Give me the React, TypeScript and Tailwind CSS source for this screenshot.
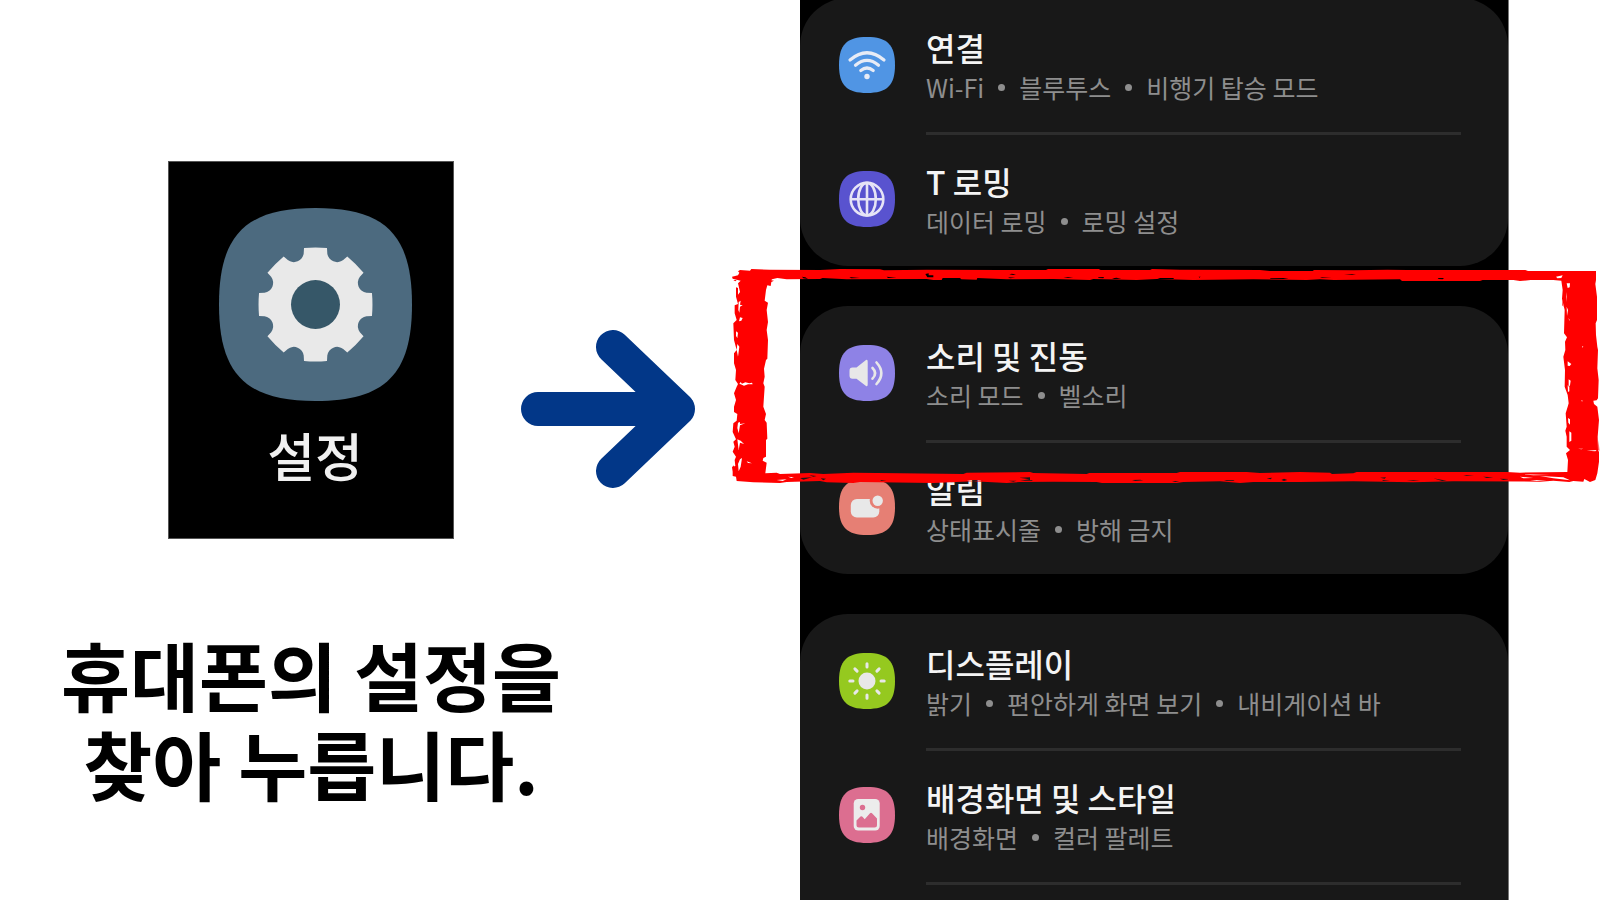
import type { ReactNode } from "react";

const SQUIRCLE = "M28 0C48.200 0 56 7.800 56 28S48.200 56 28 56 0 48.200 0 28 7.800 0 28 0Z";

type Setting = {
  title: string;
  details: string[];
  tile: string;
  glyph: ReactNode;
};

const wifi = (
  <g fill="none" stroke="#e8ecf6" strokeWidth="3.2" strokeLinecap="round">
    <path d="M11 23Q28 8.500 45 23" />
    <path d="M16.500 28.200Q28 18.500 39.500 28.200" />
    <path d="M21.800 33.500Q28 28.500 34.200 33.500" />
    <circle cx="28" cy="39.500" r="2.700" fill="#e8ecf6" stroke="none" />
  </g>
);

const globe = (
  <g fill="none" stroke="#e6e4f6" strokeWidth="2.600">
    <circle cx="28" cy="28.200" r="16.300" />
    <ellipse cx="28" cy="28.200" rx="8.800" ry="16.300" />
    <path d="M28 12V44.500M11.700 28.200H44.300" />
  </g>
);

const speaker = (
  <g fill="#e8e8e8">
    <path d="M13.500 22.500H17.500L27 15Q28.700 14 28.700 16.500V39.500Q28.700 42 27 41L17.500 33.700H13.500Q10.500 33.700 10.500 30.500V25.700Q10.500 22.500 13.500 22.500Z" />
    <g fill="none" stroke="#e8e8e8" strokeWidth="2.600" strokeLinecap="round">
      <path d="M33.500 23Q38.800 28.200 33.500 33.700" />
      <path d="M37.500 17.500Q47.200 28.200 37.500 39" />
    </g>
  </g>
);

const notice = (
  <g>
    <rect x="11.800" y="20" width="28.500" height="18.500" rx="6" fill="#e8e8e8" />
    <circle cx="38.700" cy="21.700" r="8" fill="#e67f74" />
    <circle cx="38.700" cy="21.700" r="5.200" fill="#e8e8e8" />
  </g>
);

const sun = (
  <g fill="#e8e8e8" stroke="#e8e8e8">
    <circle cx="28" cy="28" r="8.500" stroke="none" />
    <path
      strokeWidth="3"
      strokeLinecap="round"
      d="M28 10.800V14M28 42V45.200M10.800 28H14M42 28H45.200M15.900 15.900L18.100 18.100M37.900 37.900L40.100 40.100M40.100 15.900L37.900 18.100M18.100 37.900L15.900 40.100"
    />
  </g>
);

const picture = (
  <g>
    <rect x="14.700" y="12" width="26" height="31.500" rx="4.500" fill="#ececec" />
    <circle cx="23.500" cy="20.500" r="2.700" fill="#dc6e90" />
    <path
      d="M17.500 33.500L21.500 29.500Q22.500 28.800 23.500 29.800L25.700 32.200L31 26.300Q32 25.300 33 26.300L38 31.500V38Q38 40.500 35.500 40.500H20Q17.500 40.500 17.500 38Z"
      fill="#dc6e90"
    />
  </g>
);

const groups: Setting[][] = [
  [
    { title: "연결", details: ["Wi-Fi", "블루투스", "비행기 탑승 모드"], tile: "#5095e4", glyph: wifi },
    { title: "T 로밍", details: ["데이터 로밍", "로밍 설정"], tile: "#5953cf", glyph: globe },
  ],
  [
    { title: "소리 및 진동", details: ["소리 모드", "벨소리"], tile: "#8e82e6", glyph: speaker },
    { title: "알림", details: ["상태표시줄", "방해 금지"], tile: "#e67f74", glyph: notice },
  ],
  [
    { title: "디스플레이", details: ["밝기", "편안하게 화면 보기", "내비게이션 바"], tile: "#95c91f", glyph: sun },
    { title: "배경화면 및 스타일", details: ["배경화면", "컬러 팔레트"], tile: "#dc6e90", glyph: picture },
  ],
];

function Divider() {
  return <hr className="-mb-[3px] ml-[126px] mr-[47px] h-[3px] border-0 bg-[#2d2d2d]" />;
}

function SettingRow({ title, details, tile, glyph }: Setting) {
  return (
    <button type="button" className="flex h-[134px] w-full items-center gap-[31px] pl-[39px] text-left">
      <svg viewBox="0 0 56 56" className="size-14 shrink-0" aria-hidden="true">
        <path d={SQUIRCLE} fill={tile} />
        {glyph}
      </svg>
      <span className="flex flex-col whitespace-nowrap">
        <span className="text-[32px] leading-[44px] font-medium text-[#f4f4f4]">{title}</span>
        <span className="flex text-[25px] leading-9 text-[#8e8e8e]">
          {details.map((detail, i) => (
            <span key={detail} className="flex items-center">
              {i > 0 && <span className="mx-3.5 size-[7px] rounded-full bg-[#8e8e8e]" />}
              {detail}
            </span>
          ))}
        </span>
      </span>
    </button>
  );
}

/* Brush-stroke rectangle; the even-odd sub-paths leave the dry-brush flecks open. */
function BrushFrame() {
  return (
    <svg
      viewBox="36 24 2604 648"
      preserveAspectRatio="none"
      className="pointer-events-none absolute -top-[38px] -left-[68px] z-10 h-[216px] w-[calc(100%+160px)]"
      aria-hidden="true"
    >
      <g fill="#ff0000">
        <path
          fillRule="evenodd"
          d="M60 30L90 32 94 27 150 29 300 30 360 27 480 28 492 31 620 29 840 30 978 30 984 27 1136 27 1142 30 1290 30 1296 27 1380 29 1620 30 1650 33 1778 33 1782 30 1900 31 2002 29 2060 30 2416 30 2424 33 2628 33 2628 60 2626 72 2631 110 2631 180 2627 190 2628 225 2632 260 2634 270 2632 325 2636 360 2634 415 2630 421 2620 422 2622 432 2632 440 2637 480 2633 530 2634 570 2637 576 2637 605 2632 640 2626 660 2610 666 2593 657 2590 665 2560 663 2548 666 2500 662 2460 665 2200 664 2080 667 1900 664 1740 666 1600 666 1560 669 1500 664 1390 666 1370 669 1146 669 1130 666 1000 665 900 666 860 669 760 664 640 669 420 666 400 669 320 667 300 663 200 666 180 669 100 667 50 663 48 650 38 648 38 620 46 618 44 600 48 590 38 575 44 560 40 545 48 538 38 516 40 490 50 482 52 462 42 456 42 440 48 420 42 400 50 380 54 372 46 360 48 330 42 310 42 280 50 270 42 240 40 190 50 180 44 160 44 136 54 132 48 110 48 82 54 84 54 104 60 96 54 70 62 62 38 56 36 50 54 46 58 38 54 34Z
          M156 58L172 54 200 58 300 57 308 54 380 58 620 57 640 60 665 60 668 54 720 54 724 58 770 59 772 54 860 58 1000 57 1110 60 1120 57 1250 60 1310 57 1420 60 1600 58 1760 60 1800 58 1842 60 2040 58 2046 63 2280 63 2288 60 2380 60 2400 63 2432 60 2500 60 2524 62 2528 90 2526 116 2534 150 2532 220 2541 232 2535 245 2536 270 2530 290 2535 330 2534 380 2543 405 2546 430 2543 440 2537 460 2540 500 2536 512 2540 530 2540 560 2550 570 2538 580 2544 600 2542 636 2400 638 2360 636 1910 636 1900 640 1836 642 1830 638 1740 636 1620 639 1580 636 1380 636 1370 639 1108 639 1100 642 940 639 930 636 740 638 730 642 540 640 400 638 310 642 270 639 180 642 170 638 136 640 140 608 128 602 130 594 138 590 138 540 142 536 140 488 134 480 138 462 130 440 134 380 130 370 134 350 132 326 138 300 142 296 144 240 140 210 144 186 140 150 144 128 134 122 138 90 142 76 152 78 154 66 162 62 154 61Z
          M58 372L62 366 66 371 76 367 88 370 96 368 98 373 84 373 72 377 62 373Z
          M56 126L62 122 60 134 68 136 60 140 58 158 55 150Z M60 172L68 174 64 182 57 184Z M48 214L54 218 52 234 48 228Z M52 252L58 260 54 290 50 270Z
          M54 488L60 486 60 492 76 490 60 496 56 520 52 504Z M52 538L62 542 72 552 60 548 56 570Z M60 598L66 594 62 620 56 634 54 612Z M80 604L96 610 84 609Z
          M616 42L626 40 626 46 640 46 640 52 622 52Z M500 50L530 53 504 54Z M388 51L420 54 394 55Z M246 50L256 52 264 57 250 55Z
          M868 43L876 41 888 44 880 45Z M864 52L886 53 870 55Z M1030 52L1060 51 1044 54Z M1134 52L1152 51 1150 55 1136 54Z M1176 55L1190 53 1204 56 1184 57Z M1312 54L1360 54 1362 57 1320 57Z M1436 50L1442 50 1438 53Z M1650 54L1706 54 1690 57 1652 56Z M1800 52L1835 53 1806 54Z M1872 43L1908 43 1896 45Z M2153 54L2172 54 2168 58 2156 57Z
          M898 653L930 652 930 660 938 660 936 662 900 662 928 658Z M866 662L890 662 880 665Z M1236 660L1260 659 1270 661 1246 663Z M1356 663L1378 663 1366 666Z M1512 661L1540 660 1544 662 1520 663Z M1640 655L1656 653 1652 658Z M1684 660L1692 656 1702 660 1692 663Z M1980 653L1998 652 1994 656Z M1986 660L2010 662 1990 663Z M2060 661L2100 661 2080 663Z M2140 655L2180 662 2166 663Z M2230 645L2262 647 2240 648Z M2290 650L2320 652 2300 654Z M2340 656L2368 657 2350 660Z M2400 650L2440 654 2410 655Z M2430 660L2480 661 2450 663Z M2460 648L2530 652 2550 661 2500 655Z M2410 643L2490 645 2440 646Z
          M204 650L222 652 214 654Z M240 654L276 652 250 659Z M170 660L200 658 188 663Z M302 655L318 656 310 661Z M268 646L290 648 280 650Z M478 660L500 662 484 663Z M740 660L790 661 760 664Z
          M2508 50L2528 46 2524 54 2512 55Z M2540 70L2550 70 2549 82 2543 84Z M2538 96L2540 110 2539 126Z M2540 140L2544 150 2541 168Z M2546 174L2550 182 2547 180Z M2543 304L2554 312 2549 318 2543 317Z M2546 358L2552 362 2550 376 2546 382Z M2543 376L2548 380 2548 394 2544 396Z M2544 474L2550 478 2550 494 2545 488Z M2548 514L2554 518 2554 542 2548 546Z M2586 258L2590 260 2588 263Z M2584 420L2588 422 2586 425Z M2574 566L2590 566 2584 568Z M2600 572L2630 570 2626 574Z"
        />
        <path d="M36 622L42 616 40 640ZM50 60L40 60 46 64ZM2636 540L2638 572 2635 570ZM2528 116L2530 140 2527 136Z" />
      </g>
    </svg>
  );
}

/* Eight flat teeth separated by round notches. */
function gearPath() {
  const turn = (x: number, y: number, step: number) => {
    const a = (-step * Math.PI) / 4;
    return `${(x * Math.cos(a) - y * Math.sin(a)).toFixed(2)} ${(x * Math.sin(a) + y * Math.cos(a)).toFixed(2)}`;
  };
  let d = "";
  for (let i = 0; i < 8; i++) {
    d += `${i ? "L" : "M"}${turn(11.5, -56.5, i)}Q${turn(0, -57.5, i)} ${turn(-11.5, -56.5, i)}`;
    d += `L${turn(-11.8, -51, i)}A10 10 0 0 1 ${turn(11.8, -51, i + 1)}`;
  }
  return d + "Z";
}

export default function App() {
  return (
    <main className="flex h-screen w-full overflow-hidden bg-white font-['Noto_Sans_CJK_KR',sans-serif]">
      <section className="w-1/2 shrink-0 pt-[161px]">
        <div className="flex items-start gap-[67px] pl-[168px]">
          <button
            type="button"
            className="flex h-[378px] w-[286px] shrink-0 flex-col items-center border border-[#555] bg-black pt-[46px] pl-2"
          >
            <svg viewBox="0 0 56 56" className="size-[193px]" aria-hidden="true">
              <path d={SQUIRCLE} fill="#4c6a7f" />
              <g transform="translate(28 28) scale(.29)">
                <path d={gearPath()} fill="#e9e9e9" />
                <circle r="24.500" fill="#365768" />
              </g>
            </svg>
            <span className="mt-[18px] text-[52px] leading-[72px] font-medium text-[#f0f0f0]">설정</span>
          </button>
          <svg viewBox="521 330 174 158" className="mt-[169px] h-[158px] w-[174px] shrink-0" aria-hidden="true">
            <path
              d="M538 409H678M613 347L678 409 613 471"
              fill="none"
              stroke="#023788"
              strokeWidth="34"
              strokeLinecap="round"
              strokeLinejoin="round"
            />
          </svg>
        </div>
        <h1 className="mt-[90px] w-[622px] text-center text-[75px] leading-[89px] font-bold text-black">
          휴대폰의 설정을
          <br />
          찾아 누릅니다.
        </h1>
      </section>

      <section className="w-1/2 pr-[91px]">
        <div className="flex h-full flex-col gap-10 border-r border-[#777] bg-black">
          {groups.map((rows, i) => (
            <div key={rows[0].title} className={i === 0 ? "relative -mt-0.5 shrink-0" : "relative shrink-0"}>
              <div className="rounded-[48px] bg-[#181818]">
                <SettingRow {...rows[0]} />
                <Divider />
                <SettingRow {...rows[1]} />
                {i === 2 && (
                  <>
                    <Divider />
                    <div className="h-16" />
                  </>
                )}
              </div>
              {i === 1 && <BrushFrame />}
            </div>
          ))}
        </div>
      </section>
    </main>
  );
}
